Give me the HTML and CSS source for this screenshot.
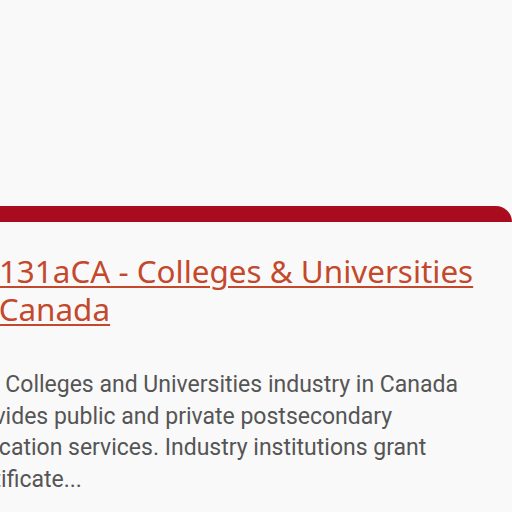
FILE: index.html
```html
<!DOCTYPE html>
<html>
<head>
<meta charset="utf-8">
<link rel="stylesheet" href="styles.css">
</head>
<body>
<div class="spacer"></div>
<div class="card">
  <h2 class="title"><a href="#">61131aCA - Colleges &amp; Universities in Canada</a></h2>
  <p class="desc">The Colleges and Universities industry in Canada provides public and private postsecondary education services. Industry institutions grant certificate...</p>
</div>
</body>
</html>
```
FILE: styles.css
```css
html, body {
  margin: 0;
  padding: 0;
  background: #f9f9f9;
  overflow: hidden;
}
.spacer {
  height: 206px;
}
.card {
  margin-left: -60px;
  width: 572px;
  box-sizing: border-box;
  border-top: 16px solid #a90c1f;
  border-top-right-radius: 16px;
  padding: 30px 15px 0 23px;
  background: #f9f9f9;
}
.title {
  margin: 0;
  font-family: "Noto Sans", "Open Sans", sans-serif;
  font-weight: 400;
  font-size: 31.4px;
  line-height: 38px;
}
.title a {
  color: #c4492c;
  text-decoration: underline;
  text-decoration-thickness: 2px;
  text-underline-offset: 3px;
}
.desc {
  margin: 41px 0 0 -2px;
  font-family: Roboto, sans-serif;
  font-size: 23px;
  line-height: 31.6px;
  color: #555;
}
```
